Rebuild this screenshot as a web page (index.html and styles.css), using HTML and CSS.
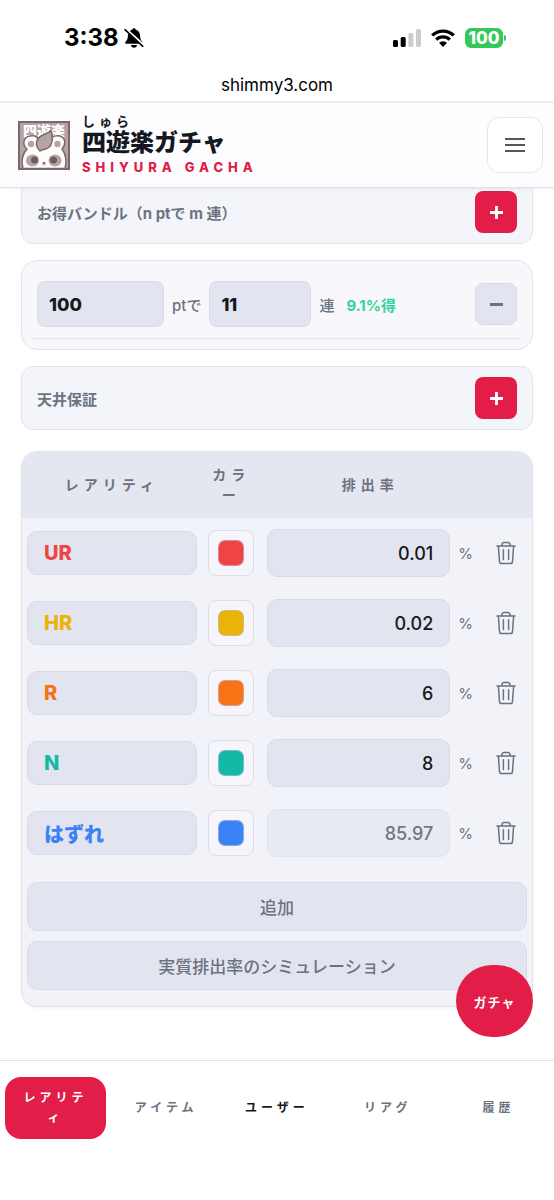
FILE: index.html
```html
<!DOCTYPE html>
<html lang="ja">
<head>
<meta charset="utf-8">
<meta name="viewport" content="width=device-width, initial-scale=1">
<title>四遊楽ガチャ</title>
<link rel="stylesheet" href="styles.css">
</head>
<body>
<svg class="sprite" aria-hidden="true">
  <symbol id="trash" viewBox="0 0 20 24">
    <path d="M1 5h18M5.600 4.800l.7-2.200q.3-1.100 1.400-1.100h4.600q1.100 0 1.400 1.100l.7 2.200M2.400 5.200l1.100 15.400q.2 2 2 2h9q1.800 0 2-2L17.600 5.200M7.400 8.800v9.700M12.600 8.800v9.700" fill="none" stroke="currentColor" stroke-width="1.500" stroke-linecap="round" stroke-linejoin="round"/>
  </symbol>
</svg>

<div class="status">
  <div class="status-side">
    <span class="clock">3:38</span>
    <svg class="bell" viewBox="0 0 20 20" aria-hidden="true">
      <path d="M10 .3c1 0 1.700.6 1.800 1.500 2.800.8 4.200 3 4.300 5.800.1 3.800 1 4.700 2.300 6.200.8 1 .4 2-.8 2H2.400c-1.200 0-1.600-1-.8-2C2.900 12.300 3.800 11.400 3.900 7.600 4 4.800 5.400 2.600 8.200 1.800 8.300.9 9 .3 10 .3zM6.900 17h6.200c-.3 1.700-1.500 2.700-3.100 2.700S7.200 18.700 6.900 17z"/>
      <path d="M1.800 1.400 20 17.800" stroke="#fff" stroke-width="3"/>
      <path d="M1 1.700 18.800 18.300" stroke="#000" stroke-width="1.600" stroke-linecap="round"/>
    </svg>
  </div>
  <div class="status-side">
    <svg class="signal" viewBox="0 0 28 18" aria-hidden="true">
      <rect y="11" width="5" height="7" rx="1.500"/><rect x="7.700" y="8" width="5" height="10" rx="1.500"/>
      <rect x="15.400" y="4" width="5" height="14" rx="1.500" fill="#ccc"/><rect x="23" width="5" height="18" rx="1.500" fill="#ccc"/>
    </svg>
    <svg class="wifi" viewBox="0 0 24 18" aria-hidden="true">
      <g fill="none" stroke="#000" stroke-width="3.200"><path d="M1.200 6.400a15.600 15.600 0 0 1 21.600 0"/><path d="M5.200 10.700a9.800 9.800 0 0 1 13.600 0"/></g>
      <path d="M8 13.800a5.800 5.800 0 0 1 8 0L12 17.900z"/>
    </svg>
    <div class="battery">100</div>
  </div>
</div>
<div class="address">shimmy3.com</div>

<header class="header">
  <svg class="logo" viewBox="0 0 52 49" aria-hidden="true">
    <rect x="1" y="1" width="50" height="47" fill="#b5a3a5" stroke="#7b686b" stroke-width="2"/>
    <text class="logo-text" x="5" y="15">四遊楽</text>
    <path d="M5 47.500C3 41 4 33 9 28 4 24 5 16 12 15c5-1 8 1 9 5q5-1.500 11 0c1-4 5-6 10-5 6 2 6 9 2 13 4 5 5 13 3 19.500z" fill="#fffdfc" stroke="#7b686b" stroke-width="1.500"/>
    <circle cx="13" cy="23" r="3.200" fill="#b5a3a5"/><circle cx="39.500" cy="23" r="3.200" fill="#b5a3a5"/>
    <ellipse cx="14.500" cy="39.500" rx="6.500" ry="6" fill="#b5a3a5"/><ellipse cx="37" cy="39.500" rx="6.500" ry="6" fill="#b5a3a5"/>
    <circle cx="16.500" cy="39" r="3.500" fill="#705b5d"/><circle cx="35.500" cy="39" r="3.500" fill="#705b5d"/>
    <ellipse cx="26" cy="42" rx="1.600" ry="1" fill="#705b5d"/><path d="M24 43.500q1 1.200 2 0 1 1.200 2 0" fill="none" stroke="#a39294" stroke-width=".7"/>
    <path d="M33 9.500c2.500 8 2 14-3 17.500-3 2-6 1-8 3-4-4-4.500-9-1.500-13 3-4 9-3.500 12.500-7.500z" fill="#b5a3a5" stroke="#7b686b" stroke-width="1.500"/>
  </svg>
  <div class="brand">
    <span class="brand-kana">しゅら</span>
    <h1 class="brand-name">四遊楽ガチャ</h1>
    <span class="brand-roman">SHIYURA GACHA</span>
  </div>
  <button class="menu" type="button" aria-label="メニュー">
    <svg class="menu-icon" viewBox="0 0 20 14" aria-hidden="true"><path d="M0 1h20M0 7h20M0 13h20" stroke="#1f1f2e" stroke-width="1.700"/></svg>
  </button>
</header>

<main class="main">
  <section class="card bar">
    <h2 class="bar-title">お得バンドル（n ptで m 連）</h2>
    <button class="square add" type="button" aria-label="バンドルを追加"><svg class="sign" viewBox="0 0 13 13" aria-hidden="true"><path d="M0 6.500h13M6.500 0v13" stroke="currentColor" stroke-width="2.800"/></svg></button>
  </section>

  <section class="card bundles">
    <div class="bundle">
      <input class="field points" id="points" type="text" inputmode="numeric" value="100">
      <label class="unit" for="points">ptで</label>
      <input class="field pulls" id="pulls" type="text" inputmode="numeric" value="11">
      <label class="unit" for="pulls">連</label>
      <span class="saving">9.1%得</span>
      <button class="square remove" type="button" aria-label="バンドルを削除"><svg class="sign" viewBox="0 0 13 13" aria-hidden="true"><path d="M0 6.500h13" stroke="currentColor" stroke-width="3"/></svg></button>
    </div>
  </section>

  <section class="card bar">
    <h2 class="bar-title">天井保証</h2>
    <button class="square add" type="button" aria-label="天井保証を追加"><svg class="sign" viewBox="0 0 13 13" aria-hidden="true"><path d="M0 6.500h13M6.500 0v13" stroke="currentColor" stroke-width="2.800"/></svg></button>
  </section>

  <section class="panel">
    <table class="rates">
      <thead>
        <tr><th class="col-name" scope="col">レアリティ</th><th class="col-color" scope="col">カラー</th><th class="col-rate" scope="col">排出率</th><th class="col-delete"></th></tr>
      </thead>
      <tbody>
        <tr>
          <td><input class="field name ur" type="text" value="UR" aria-label="レアリティ名"></td>
          <td><input class="color" type="color" value="#ef4444" aria-label="URのカラー"></td>
          <td><div class="rate"><input class="field percent" id="rate-ur" type="text" value="0.01"><label class="percent-sign" for="rate-ur">%</label></div></td>
          <td><button class="delete" type="button" aria-label="URを削除"><svg class="trash"><use href="#trash"/></svg></button></td>
        </tr>
        <tr>
          <td><input class="field name hr" type="text" value="HR" aria-label="レアリティ名"></td>
          <td><input class="color" type="color" value="#eab308" aria-label="HRのカラー"></td>
          <td><div class="rate"><input class="field percent" id="rate-hr" type="text" value="0.02"><label class="percent-sign" for="rate-hr">%</label></div></td>
          <td><button class="delete" type="button" aria-label="HRを削除"><svg class="trash"><use href="#trash"/></svg></button></td>
        </tr>
        <tr>
          <td><input class="field name r" type="text" value="R" aria-label="レアリティ名"></td>
          <td><input class="color" type="color" value="#f97316" aria-label="Rのカラー"></td>
          <td><div class="rate"><input class="field percent" id="rate-r" type="text" value="6"><label class="percent-sign" for="rate-r">%</label></div></td>
          <td><button class="delete" type="button" aria-label="Rを削除"><svg class="trash"><use href="#trash"/></svg></button></td>
        </tr>
        <tr>
          <td><input class="field name n" type="text" value="N" aria-label="レアリティ名"></td>
          <td><input class="color" type="color" value="#14b8a6" aria-label="Nのカラー"></td>
          <td><div class="rate"><input class="field percent" id="rate-n" type="text" value="8"><label class="percent-sign" for="rate-n">%</label></div></td>
          <td><button class="delete" type="button" aria-label="Nを削除"><svg class="trash"><use href="#trash"/></svg></button></td>
        </tr>
        <tr>
          <td><input class="field name miss" type="text" value="はずれ" aria-label="レアリティ名"></td>
          <td><input class="color" type="color" value="#3b82f6" aria-label="はずれのカラー"></td>
          <td><div class="rate"><input class="field percent" id="rate-miss" type="text" value="85.97" disabled><label class="percent-sign" for="rate-miss">%</label></div></td>
          <td><button class="delete" type="button" aria-label="はずれを削除"><svg class="trash"><use href="#trash"/></svg></button></td>
        </tr>
      </tbody>
    </table>
    <div class="actions">
      <button class="action" type="button">追加</button>
      <button class="action" type="button">実質排出率のシミュレーション</button>
    </div>
  </section>
</main>

<button class="draw" type="button">ガチャ</button>

<nav class="tabs">
  <button class="tab active" type="button">レアリティ</button>
  <button class="tab" type="button">アイテム</button>
  <button class="tab strong" type="button">ユーザー</button>
  <button class="tab" type="button">リアグ</button>
  <button class="tab" type="button">履歴</button>
</nav>
</body>
</html>
```
FILE: styles.css
```css
* { box-sizing: border-box; }

body {
  margin: 0;
  padding-bottom: 140px;
  background: #fff;
  color: #161821;
  font-family: Inter, "Noto Sans CJK JP", sans-serif;
  font-size: 14px;
}

button, input { font: inherit; color: inherit; margin: 0; }
button { padding: 0; border: 0; cursor: pointer; }
svg { display: block; flex: none; }
.sprite { position: absolute; width: 0; height: 0; }

.status {
  display: flex;
  justify-content: space-between;
  align-items: center;
  height: 75px;
  padding: 0 51px 0 64px;
  color: #000;
}
.status-side { display: flex; align-items: center; gap: 10px; }
.clock { font-size: 24px; font-weight: 700; }
.bell { width: 20px; height: 20px; margin-left: -5px; }
.signal { width: 28px; height: 18px; }
.wifi { width: 24px; height: 18px; }
.battery {
  position: relative;
  width: 38px;
  height: 20px;
  border-radius: 6px;
  background: #34c759;
  color: #fff;
  font-size: 17px;
  font-weight: 800;
  line-height: 20px;
  text-align: center;
}
.battery::after {
  content: "";
  position: absolute;
  top: 7px;
  right: -3px;
  width: 2px;
  height: 6px;
  border-radius: 0 2px 2px 0;
  background: #34c759;
}
.address {
  height: 28px;
  border-bottom: 2px solid #f0f0f2;
  color: #000;
  font-size: 17px;
  line-height: 20px;
  text-align: center;
}

.header {
  position: sticky;
  top: 0;
  z-index: 2;
  display: flex;
  align-items: center;
  gap: 12px;
  padding: 10px 11px 10px 18px;
  border-bottom: 1px solid #e0e2e9;
  background: #fdfdff;
  box-shadow: 0 1px 3px rgba(20, 24, 50, .06);
}
.logo { width: 52px; height: 49px; }
.logo-text { fill: #fff; font-size: 14px; font-weight: 900; }
.brand { display: flex; flex: 1; flex-direction: column; white-space: nowrap; }
.brand-kana { font-size: 13px; font-weight: 700; line-height: 16px; letter-spacing: 4px; }
.brand-name { margin: 0; font-size: 24px; font-weight: 900; line-height: 28px; }
.brand-roman { color: #e11d48; font-size: 13px; font-weight: 800; line-height: 20px; letter-spacing: 5px; }
.menu {
  display: grid;
  place-items: center;
  width: 56px;
  height: 56px;
  border: 1px solid #e6e7ee;
  border-radius: 12px;
  background: #fff;
}
.menu-icon { width: 20px; height: 14px; }

.main {
  display: flex;
  flex-direction: column;
  gap: 16px;
  margin-top: -8px;
  padding: 0 21px 53px;
}
.card { border: 1px solid #e2e4ec; border-radius: 12px; background: #f4f5fa; }
.bar { display: flex; align-items: center; justify-content: space-between; padding: 10px 15px; }
.bar-title { margin: 0; color: #6b7280; font-size: 15px; font-weight: 700; }
.square {
  display: grid;
  flex: none;
  place-items: center;
  width: 42px;
  height: 42px;
  border-radius: 8px;
}
.sign { width: 13px; height: 13px; }
.add { background: #e11d48; color: #fff; }
.remove { margin-left: auto; border: 1px solid #d8dbe6; background: #e2e5ef; color: #6b7280; }

.bundles { padding: 10px; border-radius: 16px; background: #f8f8fc; }
.bundle {
  display: flex;
  align-items: center;
  gap: 8px;
  padding: 10px 5px 11px;
  border-bottom: 1px solid #e5e6ee;
}
.field {
  min-width: 0;
  border: 1px solid #d8dbe6;
  border-radius: 8px;
  background: #e2e5ef;
  outline: 0;
}
.points, .pulls { height: 46px; padding: 0 11px; font-size: 18px; font-weight: 800; }
.points { width: 127px; }
.pulls { width: 102px; }
.unit { color: #6b7280; font-size: 15px; font-weight: 500; white-space: nowrap; }
.saving { margin-left: 4px; color: #34d399; font-size: 15px; font-weight: 700; white-space: nowrap; }

.panel {
  margin-top: 5px;
  border: 1px solid #e2e4ec;
  border-radius: 16px;
  background: #f2f3f9;
  box-shadow: 0 1px 3px rgba(20, 24, 50, .06);
  overflow: hidden;
}
.rates { width: 100%; border-collapse: collapse; table-layout: fixed; }
.rates th {
  height: 66px;
  padding: 0 5px;
  background: #e4e6f0;
  color: #6b7280;
  font-size: 14px;
  font-weight: 700;
  line-height: 20px;
  letter-spacing: 5px;
  word-break: break-all;
  line-break: anywhere;
}
.col-color { width: 59px; }
.col-rate { width: 43%; }
.col-delete { width: 52px; }
.rates td { height: 70px; padding: 0 5px; vertical-align: middle; }
.name { display: block; width: 100%; height: 44px; padding: 0 16px; border-radius: 10px; font-size: 20px; font-weight: 800; }
.ur { color: #ef4444; }
.hr { color: #eab308; }
.r { color: #f97316; }
.n { color: #14b8a6; }
.miss { color: #3b82f6; }
.color {
  display: block;
  width: 46px;
  height: 46px;
  margin: 0 auto;
  padding: 9px;
  border: 1px solid #dcdfe8;
  border-radius: 8px;
  background: #f5f5fb;
  appearance: none;
}
.color::-webkit-color-swatch-wrapper { padding: 0; }
.color::-webkit-color-swatch { border: 1px solid rgba(190, 190, 210, .6); border-radius: 7px; }
.rate { display: flex; align-items: center; gap: 8px; padding: 0 2px 0 1px; }
.percent { flex: 1; height: 48px; padding: 0 16px; border-radius: 10px; font-size: 18px; font-weight: 500; text-align: right; }
.percent:disabled { border-color: #e2e4ec; background: #e8eaf2; color: #73767e; }
.percent-sign { color: #6b7280; font-size: 15px; }
.delete { display: grid; place-items: center; width: 100%; height: 40px; background: none; color: #6b7280; }
.trash { width: 20px; height: 24px; }

.actions { display: flex; flex-direction: column; gap: 10px; padding: 14px 5px 16px; }
.action {
  height: 49px;
  border: 1px solid #d8dbe6;
  border-radius: 10px;
  background: #e2e5ef;
  color: #6b7280;
  font-size: 17px;
  font-weight: 500;
}

.draw {
  position: fixed;
  right: 21px;
  bottom: 163px;
  z-index: 3;
  width: 77px;
  height: 72px;
  border-radius: 36px;
  background: #e11d48;
  color: #fff;
  font-size: 13px;
  font-weight: 700;
  letter-spacing: 1px;
}

.tabs {
  position: fixed;
  right: 0;
  bottom: 0;
  left: 0;
  z-index: 2;
  display: flex;
  gap: 10px;
  height: 140px;
  padding: 16px 5px 61px;
  border-top: 1px solid #e2e3e7;
  background: #fff;
}
.tab {
  flex: 1 1 0;
  min-width: 0;
  padding: 0 12px;
  border-radius: 16px;
  background: none;
  color: #6b7280;
  font-size: 12px;
  font-weight: 700;
  line-height: 20px;
  letter-spacing: 4px;
  word-break: break-all;
  line-break: anywhere;
}
.strong { color: #161821; }
.active { background: #e11d48; color: #fff; }
```
